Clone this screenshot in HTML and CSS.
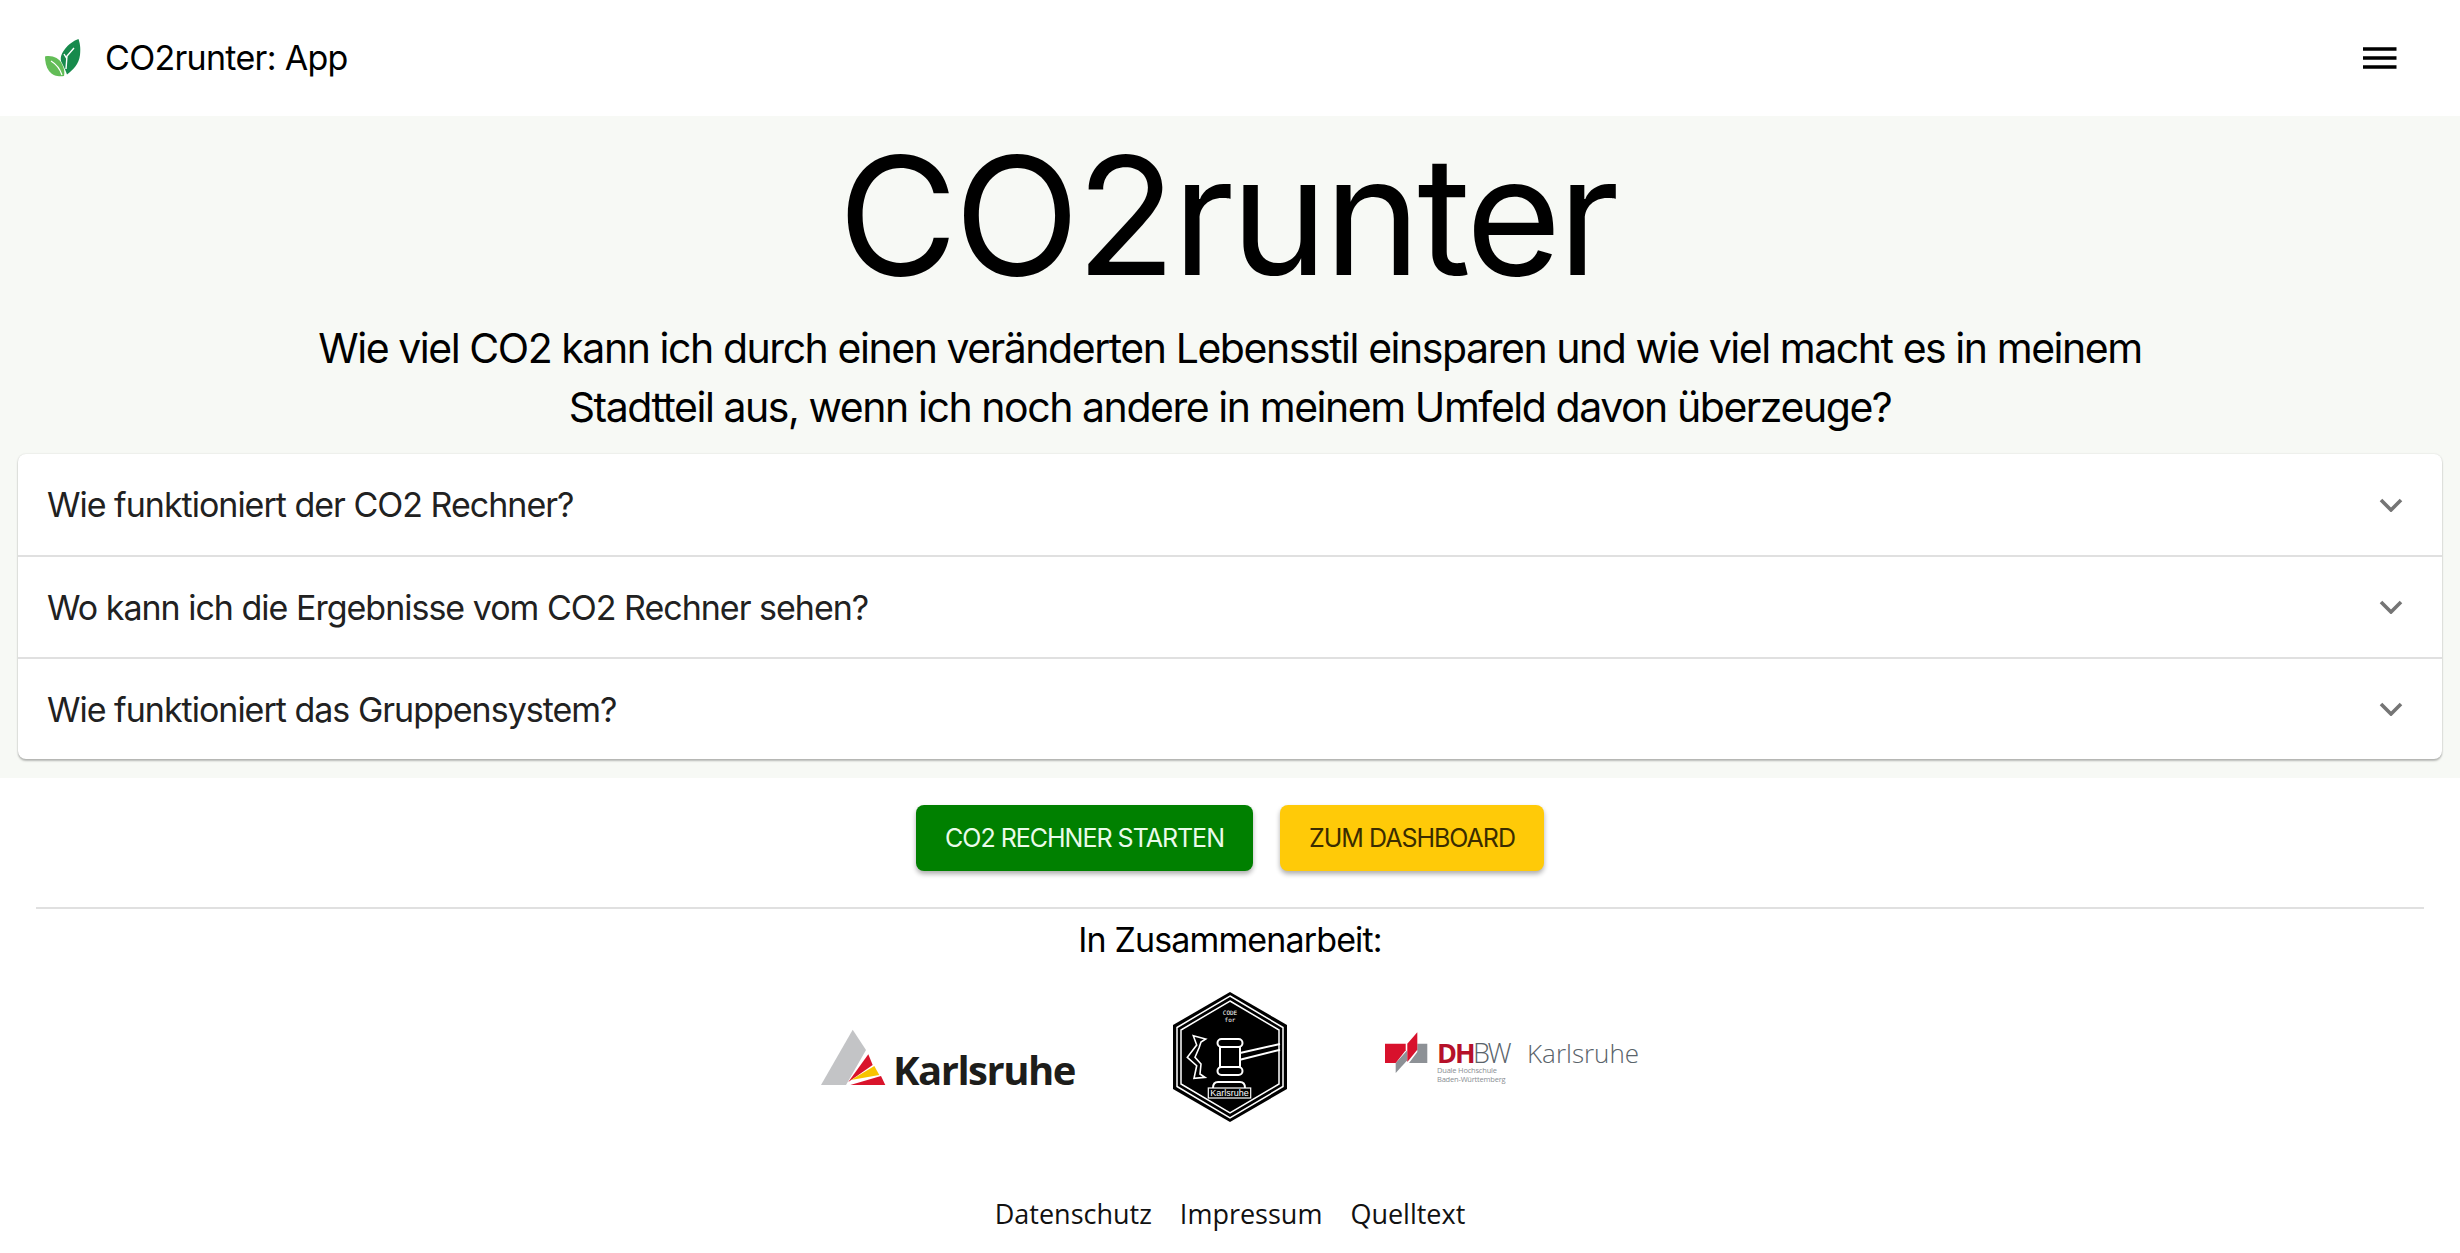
FILE: index.html
```html
<!DOCTYPE html>
<html lang="de">
<head>
<meta charset="utf-8">
<title>CO2runter: App</title>
<link rel="stylesheet" href="styles.css">
</head>
<body>
<header class="nav">
  <div class="brand">
    <svg class="leaf" viewBox="0 0 36 38" width="36" height="38">
      <path d="M33.5 0C34.5 3 36 8 35 16C34 25 28 31 22 35.500C20 30 19 28 17 24C12 16 24 3 33.500 0Z" fill="#178a4c"/>
      <path d="M0 17.500C7 16 14 19 17 25C19 29 20 33 19 37C14 38 8 37 4 32C1 28 0 22 0 17.500Z" fill="#63bd57"/>
      <path d="M21 30L22 17L29 9M22 20L19 15" stroke="#fff" stroke-width="1.400" fill="none"/>
      <path d="M6 22C11 25 15 30 17 36" stroke="#fff" stroke-width="1.200" fill="none"/>
    </svg>
    <span class="brand-name">CO2runter: App</span>
  </div>
  <button class="menu" aria-label="Menü">
    <svg viewBox="0 0 34 22" width="34" height="22"><path d="M0 2H33.500M0 11H33.500M0 20H33.500" stroke="#000" stroke-width="3.600"/></svg>
  </button>
</header>

<section class="hero">
  <h1 class="title">CO2runter</h1>
  <p class="lead">Wie viel CO2 kann ich durch einen veränderten Lebensstil einsparen und wie viel macht es in meinem<br>Stadtteil aus, wenn ich noch andere in meinem Umfeld davon überzeuge?</p>
  <div class="faq">
    <div class="faq-row"><span>Wie funktioniert der CO2 Rechner?</span><svg class="chev" viewBox="0 0 24 14" width="24" height="14"><path d="M2 2L12 12L22 2" stroke="#757575" stroke-width="3.600" fill="none"/></svg></div>
    <div class="faq-row"><span>Wo kann ich die Ergebnisse vom CO2 Rechner sehen?</span><svg class="chev" viewBox="0 0 24 14" width="24" height="14"><path d="M2 2L12 12L22 2" stroke="#757575" stroke-width="3.600" fill="none"/></svg></div>
    <div class="faq-row"><span>Wie funktioniert das Gruppensystem?</span><svg class="chev" viewBox="0 0 24 14" width="24" height="14"><path d="M2 2L12 12L22 2" stroke="#757575" stroke-width="3.600" fill="none"/></svg></div>
  </div>
</section>

<div class="actions">
  <a class="btn btn-green">CO2 RECHNER STARTEN</a>
  <a class="btn btn-yellow">ZUM DASHBOARD</a>
</div>
<hr class="rule">
<p class="partners">In Zusammenarbeit:</p>
<div class="logos">
  <svg class="logo-ka" viewBox="0 -2 254 60" width="254" height="60">
    <path d="M31.700 .7L0 56H25L45 21Z" fill="#c3c4c6"/>
    <path d="M47.300 25.300L51.700 36L27.300 53Z" fill="#d9142b"/>
    <path d="M53.300 37L58.300 46L30 51Z" fill="#f8c400"/>
    <path d="M60 47L64.300 56H29.300Z" fill="#d9142b"/>
    <text x="72" y="56" class="ka-text">Karlsruhe</text>
  </svg>
  <svg class="logo-cfk" viewBox="0 0 114 130" width="114" height="130">
    <path d="M57 0L114 33V97L57 130L0 97V33Z" fill="#000"/>
    <path d="M57 4L110 35.500V94.500L57 126L4 94.500V35.500Z" fill="none" stroke="#fff" stroke-width="1.500"/>
    <path d="M57 9L106 38V92L57 121L8 92V38Z" fill="none" stroke="#fff" stroke-width="1.500"/>
    <text x="57" y="23" class="cfk-small">CODE</text>
    <text x="57" y="30" class="cfk-small">for</text>
    <path d="M20.300 43.700L32.700 47L28 50L26 56L22 65.300L28 72L27 82L32 85.300L21 86.300L23.700 73.700L14.300 65.300L23.700 53Z" fill="none" stroke="#fff" stroke-width="1.600"/>
    <rect x="44.500" y="47" width="25" height="8" rx="4" fill="none" stroke="#fff" stroke-width="2"/>
    <rect x="44.500" y="75" width="25" height="8" rx="4" fill="none" stroke="#fff" stroke-width="2"/>
    <rect x="47" y="55" width="20" height="20" fill="none" stroke="#fff" stroke-width="2"/>
    <path d="M67 61L107 52M67 67.700L107 57.700" stroke="#fff" stroke-width="2"/>
    <path d="M40 96C40 92 42 90 45 90H67C70 90 72 92 72 96" fill="none" stroke="#fff" stroke-width="2"/>
    <rect x="35.300" y="96" width="42.400" height="10" fill="#000" stroke="#fff" stroke-width="1.200"/>
    <text x="56.500" y="104.300" class="cfk-ka">Karlsruhe</text>
  </svg>
  <svg class="logo-dh" viewBox="0 0 254 50" width="254" height="50">
    <path d="M32.300 11.700H42.300V31H24L32.300 20Z" fill="#8d9196"/>
    <path d="M10.700 31L22.300 18.300V28.300L10.700 41Z" fill="#8d9196"/>
    <path d="M0 11.700H20.700V18.300L10.700 31H0Z" fill="#d8112c"/>
    <path d="M22.300 11.700L32.300 .3V17.700L22.300 30Z" fill="#d8112c"/>
    <text x="52" y="31" class="dh-bold">DH</text>
    <text x="88" y="31" class="dh-thin">BW</text>
    <text x="52" y="41" class="dh-small">Duale Hochschule</text>
    <text x="52" y="50" class="dh-small">Baden-Württemberg</text>
    <text x="142" y="31" class="dh-city">Karlsruhe</text>
  </svg>
</div>
<footer class="foot">
  <a>Datenschutz</a><a>Impressum</a><a>Quelltext</a>
</footer>
</body>
</html>
```
FILE: styles.css
```css
* { box-sizing: border-box; }
html, body { margin: 0; padding: 0; }
body { background: #fff; color: #000; font-family: Inter, "Liberation Sans", sans-serif; height: 1253px; overflow: hidden; }
.nav { height: 116px; display: flex; align-items: center; justify-content: space-between; padding: 0 63px 0 45px; }
.brand { display: flex; align-items: center; gap: 24px; }
.leaf { display: block; }
.brand-name { font-size: 34px; line-height: 40px; letter-spacing: -.7px; }
.menu { border: 0; background: none; padding: 0; display: flex; }
.hero { background: #f7f9f5; height: 662px; padding: 12px 18px 0; text-align: center; }
.title { margin: 0; padding-right: 6px; font-size: 164px; font-weight: 400; line-height: 176px; letter-spacing: -3.600px; }
.lead { margin: 15px 0 0; font-size: 41px; line-height: 59px; letter-spacing: -1.450px; }
.faq { margin-top: 17px; background: #fff; border-radius: 8px; box-shadow: 0 2px 2px rgba(0,0,0,.25), 0 0 2px rgba(0,0,0,.14); text-align: left; }
.faq-row { height: 102px; display: flex; align-items: center; justify-content: space-between; padding: 0 39px 0 29px; font-size: 34px; letter-spacing: -1px; color: #212121; border-top: 2px solid #e0e0e0; }
.faq-row:first-child { border-top: 0; height: 101px; }
.actions { display: flex; justify-content: center; gap: 27px; margin-top: 27px; }
.btn { height: 66px; border-radius: 8px; padding: 0 29px; display: flex; align-items: center; font-size: 25px; letter-spacing: -1px; box-shadow: 0 3px 5px rgba(0,0,0,.32); }
.btn-green { background: #008000; color: #eafbea; }
.btn-yellow { background: #ffca08; color: #3a2c00; }
.rule { margin: 36px 36px 0; border: 0; border-top: 2px solid #e0e0e0; }
.partners { margin: 8px 0 0; text-align: center; font-size: 34px; line-height: 46px; letter-spacing: -.87px; }
.logos { display: flex; justify-content: center; align-items: center; gap: 98px; margin-top: 29px; padding-right: 1px; }
.logos svg { overflow: visible; }
.ka-text { font-family: "Open Sans", sans-serif; font-weight: 700; font-size: 40px; letter-spacing: -1.500px; fill: #1d1d1b; }
.cfk-small { font-family: "DejaVu Sans Mono", monospace; font-size: 6px; fill: #fff; text-anchor: middle; }
.cfk-ka { font-family: "Liberation Sans", sans-serif; font-size: 9px; fill: #fff; text-anchor: middle; }
.dh-bold { font-family: "Open Sans", sans-serif; font-weight: 700; font-size: 27px; letter-spacing: -2px; fill: #b5112a; }
.dh-thin { font-family: "Open Sans", sans-serif; font-weight: 300; font-size: 27px; letter-spacing: -2.500px; fill: #59636a; }
.dh-small { font-family: "Open Sans", sans-serif; font-size: 7.500px; letter-spacing: -.2px; fill: #8a8f94; }
.dh-city { font-family: "Open Sans", sans-serif; font-weight: 300; font-size: 26px; fill: #59636a; }
.foot { display: flex; justify-content: center; gap: 28px; margin-top: 72px; font-family: "Open Sans", sans-serif; font-size: 27px; line-height: 40px; color: #111; }
```
